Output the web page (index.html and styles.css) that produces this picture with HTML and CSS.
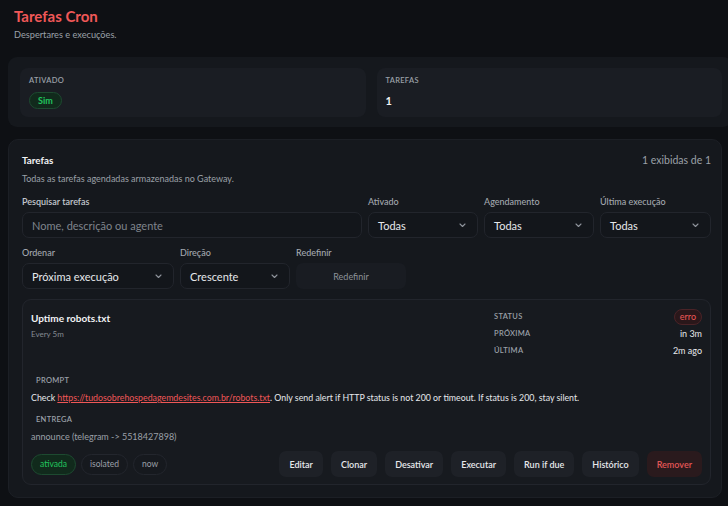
FILE: index.html
```html
<!DOCTYPE html>
<html lang="pt-BR">
<head>
<meta charset="utf-8">
<title>Tarefas Cron</title>
<link rel="stylesheet" href="styles.css">
</head>
<body>
<div class="page">
  <header class="page-head">
    <h1 class="page-title">Tarefas Cron</h1>
    <p class="page-sub">Despertares e execuções.</p>
  </header>

  <section class="stats">
    <div class="stat">
      <div class="stat-label">Ativado</div>
      <div class="stat-value"><span class="pill pill-ok">Sim</span></div>
    </div>
    <div class="stat">
      <div class="stat-label">Tarefas</div>
      <div class="stat-value"><span class="stat-num">1</span></div>
    </div>
  </section>

  <section class="card">
    <div class="card-head">
      <div class="card-title">Tarefas</div>
      <div class="card-count">1 exibidas de 1</div>
    </div>
    <div class="card-desc">Todas as tarefas agendadas armazenadas no Gateway.</div>

    <div class="filters filters-1">
      <label class="field">
        <span class="field-label">Pesquisar tarefas</span>
        <span class="control input"><span class="placeholder">Nome, descrição ou agente</span></span>
      </label>
      <div class="field">
        <span class="field-label">Ativado</span>
        <span class="control select"><span>Todas</span><svg class="chev" width="7" height="5" viewBox="0 0 7 5"><path d="M1 1l2.5 2.5L6 1" fill="none" stroke="currentColor" stroke-width="1.1" stroke-linecap="round" stroke-linejoin="round"/></svg></span>
      </div>
      <div class="field">
        <span class="field-label">Agendamento</span>
        <span class="control select"><span>Todas</span><svg class="chev" width="7" height="5" viewBox="0 0 7 5"><path d="M1 1l2.5 2.5L6 1" fill="none" stroke="currentColor" stroke-width="1.1" stroke-linecap="round" stroke-linejoin="round"/></svg></span>
      </div>
      <div class="field">
        <span class="field-label">Última execução</span>
        <span class="control select"><span>Todas</span><svg class="chev" width="7" height="5" viewBox="0 0 7 5"><path d="M1 1l2.5 2.5L6 1" fill="none" stroke="currentColor" stroke-width="1.1" stroke-linecap="round" stroke-linejoin="round"/></svg></span>
      </div>
    </div>

    <div class="filters filters-2">
      <div class="field">
        <span class="field-label">Ordenar</span>
        <span class="control select"><span>Próxima execução</span><svg class="chev" width="7" height="5" viewBox="0 0 7 5"><path d="M1 1l2.5 2.5L6 1" fill="none" stroke="currentColor" stroke-width="1.1" stroke-linecap="round" stroke-linejoin="round"/></svg></span>
      </div>
      <div class="field">
        <span class="field-label">Direção</span>
        <span class="control select"><span>Crescente</span><svg class="chev" width="7" height="5" viewBox="0 0 7 5"><path d="M1 1l2.5 2.5L6 1" fill="none" stroke="currentColor" stroke-width="1.1" stroke-linecap="round" stroke-linejoin="round"/></svg></span>
      </div>
      <div class="field">
        <span class="field-label">Redefinir</span>
        <span class="control reset">Redefinir</span>
      </div>
    </div>

    <article class="job">
      <div class="job-top">
        <div class="job-main">
          <div class="job-name">Uptime robots.txt</div>
          <div class="job-sched">Every 5m</div>
        </div>
        <div class="job-meta">
          <span class="meta-label">Status</span><span class="meta-val"><span class="pill pill-err">erro</span></span>
          <span class="meta-label">Próxima</span><span class="meta-val">in 3m</span>
          <span class="meta-label">Última</span><span class="meta-val">2m ago</span>
        </div>
      </div>

      <div class="job-body">
        <div class="sec-label">Prompt</div>
        <div class="sec-text">Check <a class="link" href="#">https://tudosobrehospedagemdesites.com.br/robots.txt</a>. Only send alert if HTTP status is not 200 or timeout. If status is 200, stay silent.</div>
        <div class="sec-label sec-gap">Entrega</div>
        <div class="sec-text muted">announce (telegram -&gt; 5518427898)</div>
      </div>

      <div class="job-foot">
        <div class="chips">
          <span class="chip chip-ok">ativada</span>
          <span class="chip">isolated</span>
          <span class="chip">now</span>
        </div>
        <div class="actions">
          <button class="btn">Editar</button>
          <button class="btn">Clonar</button>
          <button class="btn">Desativar</button>
          <button class="btn">Executar</button>
          <button class="btn">Run if due</button>
          <button class="btn">Histórico</button>
          <button class="btn btn-danger">Remover</button>
        </div>
      </div>
    </article>
  </section>
</div>
</body>
</html>
```
FILE: styles.css
```css
* { box-sizing: border-box; }
html, body { margin: 0; padding: 0; }
body {
  background: #0e1014;
  color: #e6e8eb;
  font-family: "Lato", "Noto Sans", sans-serif;
  font-size: 9px;
  overflow: hidden;
  width: 728px;
  height: 506px;
}
.page { padding: 6px 0 0 8px; }

.page-head { padding-left: 6px; }
.page-title {
  margin: 0;
  font-size: 15px;
  line-height: 20px;
  font-weight: 700;
  color: #f05858;
}
.page-sub {
  margin: 2px 0 0;
  font-size: 9.2px;
  line-height: 14px;
  color: #9ba0a8;
}

.stats {
  margin-top: 15px;
  width: 724px;
  background: #15181d;
  border-radius: 9px;
  padding: 11px 10px 10px 12px;
  display: grid;
  grid-template-columns: 1fr 1fr;
  gap: 11px;
}
.stat {
  background: #1a1d23;
  border-radius: 8px;
  padding: 8px 9px;
  height: 49px;
}
.stat-label {
  font-size: 7.5px;
  line-height: 10px;
  text-transform: uppercase;
  letter-spacing: 0.3px;
  color: #9ba0a8;
  font-weight: 600;
}
.stat-value {
  margin-top: 6px;
  height: 17px;
  display: flex;
  align-items: center;
}
.stat-num { font-size: 11px; font-weight: 700; color: #f2f3f5; }

.pill {
  display: inline-flex;
  align-items: center;
  justify-content: center;
  border-radius: 9px;
  font-size: 9px;
  font-weight: 700;
}
.pill-ok {
  height: 17px;
  padding: 0 8px;
  background: #112a1c;
  border: 1px solid #1d4a30;
  color: #22c55e;
}
.pill-err {
  height: 16px;
  padding: 0 5px;
  background: #2a171a;
  border: 1px solid #4a2327;
  color: #ef5757;
  font-weight: 400;
}

.card {
  margin-top: 12px;
  width: 714px;
  height: 359px;
  background: #15181d;
  border: 1px solid #1c1f25;
  border-radius: 10px;
  padding: 13px 10px 12px 13px;
}
.card-head {
  display: flex;
  justify-content: space-between;
  align-items: center;
  height: 14px;
}
.card-title { font-size: 9.8px; font-weight: 700; color: #f2f3f5; }
.card-count { font-size: 10.5px; color: #9ba0a8; }
.card-desc {
  margin-top: 5px;
  font-size: 9px;
  line-height: 14px;
  color: #9ba0a8;
}

.filters { display: grid; gap: 6px; }
.filters-1 { margin-top: 9px; grid-template-columns: 340px 110px 110px 111px; }
.filters-2 { margin-top: 8px; grid-template-columns: 152px 110px 110px; }
.field { display: flex; flex-direction: column; }
.field-label {
  font-size: 9px;
  line-height: 14px;
  color: #c3c7cd;
  font-weight: 600;
  margin-bottom: 3px;
}
.filters-1 .field + .field .field-label,
.filters-2 .field-label { color: #a3a8af; font-weight: 500; }
.control {
  height: 26px;
  border-radius: 7px;
  display: flex;
  align-items: center;
  font-size: 11px;
}
.input, .select {
  background: #13161b;
  border: 1px solid #22252c;
  padding: 0 9px;
}
.placeholder { color: #7f848c; }
.select { justify-content: space-between; color: #e6e8eb; }
.chev { color: #8f949c; margin-right: 2px; }
.reset {
  background: #191c22;
  justify-content: center;
  color: #8d9299;
  font-size: 9px;
}

.job {
  margin-top: 10px;
  height: 186px;
  background: #171a1f;
  border: 1px solid #22252c;
  border-radius: 9px;
  padding: 9px 8px 0 8px;
}
.job-top { display: flex; justify-content: space-between; }
.job-name { font-size: 10px; line-height: 18px; font-weight: 700; color: #f2f3f5; }
.job-sched { font-size: 8px; line-height: 12px; color: #858a92; margin-top: 1px; }
.job-meta {
  width: 208px;
  display: grid;
  grid-template-columns: auto 1fr;
  row-gap: 1px;
  align-items: center;
}
.meta-label {
  font-size: 7.5px;
  line-height: 16px;
  text-transform: uppercase;
  letter-spacing: 0.3px;
  color: #9ba0a8;
  font-weight: 600;
}
.meta-val { font-size: 9px; line-height: 16px; color: #e6e8eb; display: flex; justify-content: flex-end; }

.job-body { margin-top: 16px; }
.sec-label {
  padding-left: 5px;
  font-size: 7.5px;
  line-height: 11px;
  text-transform: uppercase;
  letter-spacing: 0.3px;
  color: #9ba0a8;
  font-weight: 600;
}
.sec-gap { margin-top: 9px; }
.sec-text {
  margin-top: 5px;
  font-size: 8.8px;
  line-height: 14px;
  color: #e6e8eb;
  white-space: nowrap;
}
.sec-text.muted { color: #9ba0a8; font-size: 9px; }
.link { color: #ef5757; text-decoration: underline; }

.job-foot {
  margin-top: 7px;
  display: flex;
  justify-content: space-between;
  align-items: center;
}
.chips { display: flex; gap: 5px; }
.chip {
  height: 21px;
  padding: 0 8px;
  border-radius: 11px;
  border: 1px solid #23262d;
  background: #16191e;
  color: #9ba0a8;
  font-size: 8.5px;
  display: inline-flex;
  align-items: center;
}
.chip-ok { background: #112a1c; border-color: #1d4a30; color: #22c55e; }
.actions { display: flex; gap: 8px; }
.btn {
  height: 26px;
  padding: 0 10px;
  border: none;
  border-radius: 7px;
  background: #1e2127;
  color: #e6e8eb;
  font-family: inherit;
  font-size: 9px;
  font-weight: 600;
}
.btn-danger { background: #2a1a1d; color: #e25656; }
```
